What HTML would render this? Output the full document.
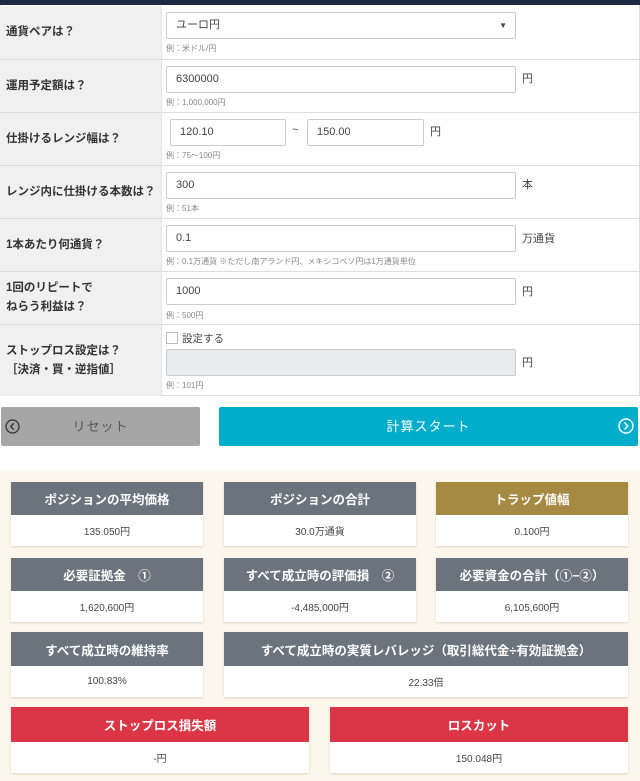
<!DOCTYPE html>
<html><head><meta charset="utf-8"><style>
*{box-sizing:border-box;margin:0;padding:0}
body{width:640px;height:781px;background:#fff;font-family:"Liberation Sans","Noto Sans CJK JP",sans-serif;color:#333;position:relative;overflow:hidden}
.a{position:absolute}
.lab{position:absolute;left:0;width:161px;background:#f0f0f0;font-size:11.5px;font-weight:bold;color:#333;padding-left:6px;display:flex;align-items:center;line-height:19px;border-bottom:1px solid #ddd}
.val{position:absolute;left:161px;width:478px;border-bottom:1px solid #ddd;border-left:1px solid #e6e6e6}
.in{position:absolute;height:27px;border:1px solid #ccc;background:#fff;font-size:11px;padding-left:9px;line-height:25px;color:#444;border-radius:2px}
.hint{position:absolute;font-size:8px;color:#888}
.u{position:absolute;font-size:11px;color:#444}
.box{position:absolute;background:#fff;box-shadow:0 1px 2px rgba(0,0,0,.15)}
.h{background:#6b737c;color:#fff;font-weight:bold;font-size:12.5px;text-align:center;display:flex;align-items:center;justify-content:center}
.v{font-size:10px;color:#444;text-align:center;display:flex;align-items:center;justify-content:center}
</style></head><body>
<div class="a" style="left:0;top:0;width:640px;height:5px;background:#1d2a44"></div>
<div class="a" style="left:0;top:5px;width:640px;height:391px;border:1px solid #ddd;border-top:none"></div>

<div class="lab" style="top:6px;height:54px">通貨ペアは？</div>
<div class="val" style="top:6px;height:54px"></div>
<div class="in" style="left:166px;top:12px;width:350px">ユーロ円<span style="position:absolute;right:8px;font-size:8px">▼</span></div>
<div class="hint" style="left:166px;top:43px">例：米ドル/円</div>

<div class="lab" style="top:60px;height:53px">運用予定額は？</div>
<div class="val" style="top:60px;height:53px"></div>
<div class="in" style="left:166px;top:66px;width:350px">6300000</div>
<div class="u" style="left:522px;top:70px">円</div>
<div class="hint" style="left:166px;top:97px">例：1,000,000円</div>

<div class="lab" style="top:113px;height:53px">仕掛けるレンジ幅は？</div>
<div class="val" style="top:113px;height:53px"></div>
<div class="in" style="left:170px;top:119px;width:116px">120.10</div>
<div class="u" style="left:292px;top:124px">~</div>
<div class="in" style="left:307px;top:119px;width:117px">150.00</div>
<div class="u" style="left:430px;top:123px">円</div>
<div class="hint" style="left:166px;top:150px">例：75〜100円</div>

<div class="lab" style="top:166px;height:53px">レンジ内に仕掛ける本数は？</div>
<div class="val" style="top:166px;height:53px"></div>
<div class="in" style="left:166px;top:172px;width:350px">300</div>
<div class="u" style="left:522px;top:176px">本</div>
<div class="hint" style="left:166px;top:203px">例：51本</div>

<div class="lab" style="top:219px;height:53px">1本あたり何通貨？</div>
<div class="val" style="top:219px;height:53px"></div>
<div class="in" style="left:166px;top:225px;width:350px">0.1</div>
<div class="u" style="left:522px;top:230px">万通貨</div>
<div class="hint" style="left:166px;top:256px">例：0.1万通貨 ※ただし南アランド円、メキシコペソ円は1万通貨単位</div>

<div class="lab" style="top:272px;height:53px">1回のリピートで<br>ねらう利益は？</div>
<div class="val" style="top:272px;height:53px"></div>
<div class="in" style="left:166px;top:278px;width:350px">1000</div>
<div class="u" style="left:522px;top:283px">円</div>
<div class="hint" style="left:166px;top:310px">例：500円</div>

<div class="lab" style="top:325px;height:71px;border-bottom:none">ストップロス設定は？<br>［決済・買・逆指値］</div>
<div class="val" style="top:325px;height:71px;border-bottom:none"></div>
<div class="a" style="left:166px;top:332px;width:12px;height:12px;border:1px solid #bbb;background:#fff"></div>
<div class="u" style="left:182px;top:331px;font-size:10.5px">設定する</div>
<div class="in" style="left:166px;top:349px;width:350px;background:#e9ecef;border-color:#ccc"></div>
<div class="u" style="left:522px;top:354px">円</div>
<div class="hint" style="left:166px;top:380px">例：101円</div>

<div class="a" style="left:1px;top:407px;width:199px;height:39px;background:#a6a6a6;border-radius:2px;color:#555;font-size:13px;text-align:center;line-height:39px;letter-spacing:1px">リセット
<svg class="a" style="left:4px;top:12px" width="15" height="15" viewBox="0 0 15 15"><circle cx="7.5" cy="7.5" r="6.5" fill="none" stroke="#333" stroke-width="1.3"/><path d="M8.8 4.3L5.8 7.5L8.8 10.7" fill="none" stroke="#333" stroke-width="1.3"/></svg></div>
<div class="a" style="left:219px;top:407px;width:419px;height:39px;background:#00aecb;border-radius:2px;color:#fff;font-size:13px;text-align:center;line-height:39px;letter-spacing:1px">計算スタート
<svg class="a" style="left:399px;top:11px" width="16" height="16" viewBox="0 0 16 16"><circle cx="8" cy="8" r="7" fill="none" stroke="#fff" stroke-width="1.4"/><path d="M6.5 4.5L9.8 8L6.5 11.5" fill="none" stroke="#fff" stroke-width="1.4"/></svg></div>

<div class="a" style="left:0;top:471px;width:640px;height:310px;background:#fdf7eb"></div>

<div class="box" style="left:11px;top:482px;width:192px;height:64px"><div class="h" style="height:33px">ポジションの平均価格</div><div class="v" style="height:31px">135.050円</div></div>
<div class="box" style="left:224px;top:482px;width:192px;height:64px"><div class="h" style="height:33px">ポジションの合計</div><div class="v" style="height:31px">30.0万通貨</div></div>
<div class="box" style="left:436px;top:482px;width:192px;height:64px"><div class="h" style="height:33px;background:#a68a43">トラップ値幅</div><div class="v" style="height:31px">0.100円</div></div>

<div class="box" style="left:11px;top:558px;width:192px;height:64px"><div class="h" style="height:33px">必要証拠金　①</div><div class="v" style="height:31px">1,620,600円</div></div>
<div class="box" style="left:224px;top:558px;width:192px;height:64px"><div class="h" style="height:33px">すべて成立時の評価損　②</div><div class="v" style="height:31px">-4,485,000円</div></div>
<div class="box" style="left:436px;top:558px;width:192px;height:64px"><div class="h" style="height:33px">必要資金の合計（①−②）</div><div class="v" style="height:31px">6,105,600円</div></div>

<div class="box" style="left:11px;top:632px;width:192px;height:65px"><div class="h" style="height:34px">すべて成立時の維持率</div><div class="v" style="height:31px">100.83%</div></div>
<div class="box" style="left:224px;top:632px;width:404px;height:65px"><div class="h" style="height:34px">すべて成立時の実質レバレッジ（取引総代金÷有効証拠金）</div><div class="v" style="height:31px">22.33倍</div></div>

<div class="box" style="left:11px;top:707px;width:298px;height:66px"><div class="h" style="height:35px;background:#dc3545">ストップロス損失額</div><div class="v" style="height:31px">-円</div></div>
<div class="box" style="left:330px;top:707px;width:298px;height:66px"><div class="h" style="height:35px;background:#dc3545">ロスカット</div><div class="v" style="height:31px">150.048円</div></div>
</body></html>
